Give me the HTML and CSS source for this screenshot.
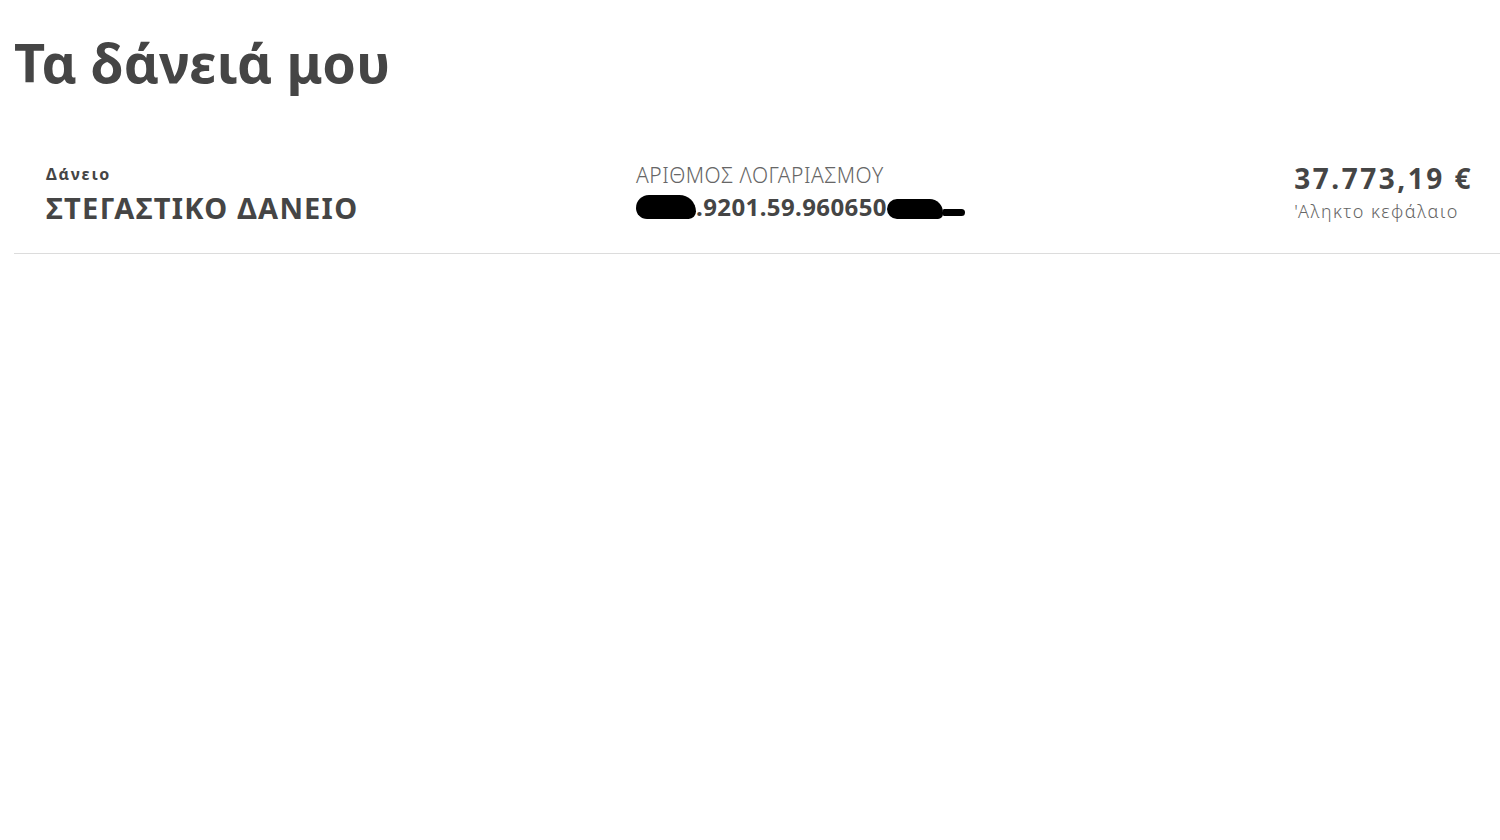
FILE: index.html
```html
<!DOCTYPE html>
<html lang="el">
<head>
  <meta charset="UTF-8">
  <meta name="viewport" content="width=device-width, initial-scale=1.0">
  <title>Τα δάνειά μου</title>
  <link rel="stylesheet" href="styles.css">
</head>
<body>
  <h1 class="page-title">Τα δάνειά μου</h1>
  <div class="loan-list">
    <div class="loan-row">
      <div class="loan-col loan-name">
        <div class="label-small">Δάνειο</div>
        <div class="value-big">ΣΤΕΓΑΣΤΙΚΟ ΔΑΝΕΙΟ</div>
      </div>
      <div class="loan-col loan-account">
        <div class="label-light">ΑΡΙΘΜΟΣ ΛΟΓΑΡΙΑΣΜΟΥ</div>
        <div class="account-no"><span class="blot blot-a"></span>.9201.59.960650<span class="blot blot-b"></span><span class="blot blot-tail"></span></div>
      </div>
      <div class="loan-col loan-amount">
        <div class="amount">37.773,19 €</div>
        <div class="label-light small">'Αληκτο κεφάλαιο</div>
      </div>
    </div>
  </div>
</body>
</html>
```

FILE: styles.css
```css
body { margin: 0; padding: 0 0 0 14px; font-family: "Noto Sans", "Open Sans", sans-serif; color: #454545; background: #fff; }
.page-title { margin: 0; padding-top: 27px; font-size: 54px; font-weight: 700; line-height: 70px; color: #454545; letter-spacing: 0; }
.loan-list { margin-top: 54px; }
.loan-row { display: flex; align-items: flex-start; padding: 10px 27px 25px 32px; border-bottom: 1px solid #dcdcdc; }
.loan-col { display: flex; flex-direction: column; }
.loan-name { width: 590px; }
.loan-account { flex: 1; }
.label-small { font-size: 16px; font-weight: 700; line-height: 26px; letter-spacing: 1.8px; }
.value-big { font-size: 29px; font-weight: 700; line-height: 40px; letter-spacing: 1.3px; margin-top: 1px; }
.label-light { font-size: 21px; font-weight: 300; line-height: 28px; color: #666; letter-spacing: 0.5px; }
.label-light.small { font-size: 18px; margin-top: 2px; letter-spacing: 1.5px; }
.account-no { font-size: 24px; font-weight: 700; line-height: 36px; letter-spacing: 0.4px; display: flex; align-items: center; }
.amount { font-size: 28px; font-weight: 700; line-height: 34px; letter-spacing: 2.5px; }
.blot { display: inline-block; background: #000; }
.blot-a { width: 60px; height: 24px; border-radius: 14px 18px 8px 12px; }
.blot-b { width: 56px; height: 20px; border-radius: 12px 16px 6px 12px; margin-top: 4px; }
.blot-tail { width: 22px; height: 7px; border-radius: 2px 6px 6px 2px; margin-top: 10px; }
```
